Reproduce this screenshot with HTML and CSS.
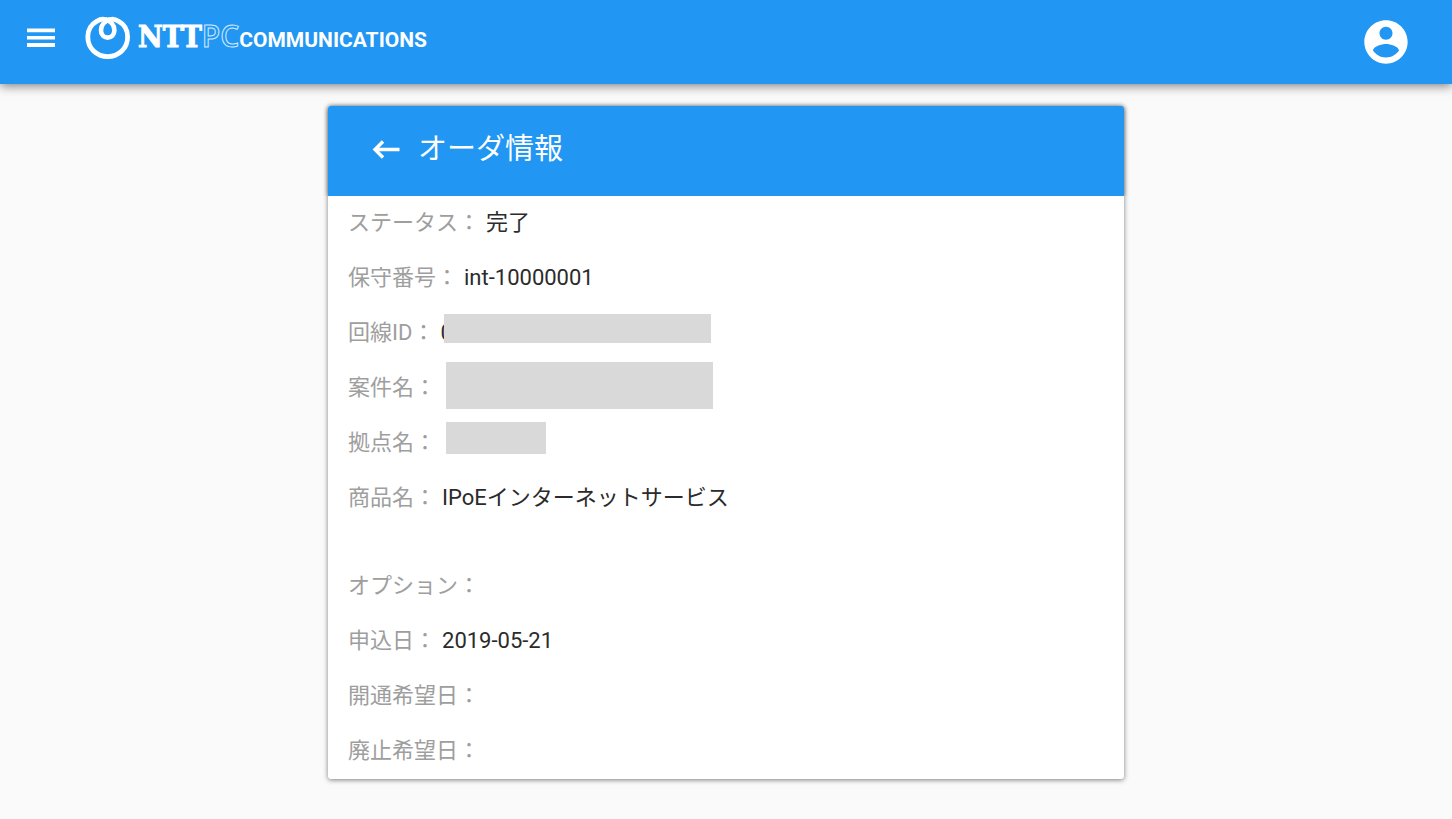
FILE: index.html
```
<!DOCTYPE html>
<html lang="ja">
<head>
    <meta charset="UTF-8">
    <meta name="viewport" content="width=device-width, initial-scale=1.0">
    <title>オーダ情報</title>
    <link rel="stylesheet" href="styles.css">
</head>
<body>
    <header class="app-bar">
        <button type="button" class="icon-button menu-button" aria-label="メニュー">
            <svg width="28" height="20" viewBox="0 0 28 20" fill="currentColor">
                <path d="M0 0.5h28v3.8H0zM0 8.1h28v3.4H0zM0 15.1h28v3.8H0z"/>
            </svg>
        </button>
        <a href="#" class="logo">
            <svg class="logo-mark" width="46" height="44" viewBox="0 0 46 44" fill="none" stroke="currentColor">
                <path stroke-width="4.6" d="M25 3.200C19 5.500 16 9.500 16 14.300C16 18.800 19 21.600 22.700 21.600C26.400 21.600 29.400 18.800 29.400 14.300C29.400 9.500 26.400 5.500 20.400 3.200"/>
                <path stroke-width="4.800" d="M22.700 4.500C19.500 2.700 15.500 2.800 12 5.200C6.500 8.200 2.800 14 2.800 21C2.800 32.200 11.700 40.600 22.700 40.600C33.700 40.600 42.600 32.200 42.600 21C42.600 14 39 8.200 33.400 5.200C30 2.800 26 2.700 22.700 4.500"/>
            </svg>
            <span class="logo-text">
                <span class="logo-ntt">NTT</span><span class="logo-pc">PC</span><span class="logo-com">COMMUNICATIONS</span>
            </span>
        </a>
        <button type="button" class="icon-button account-button" aria-label="アカウント">
            <svg width="52" height="52" viewBox="0 0 24 24" fill="currentColor">
                <path d="M12 2C6.480 2 2 6.480 2 12s4.480 10 10 10 10-4.480 10-10S17.520 2 12 2zm0 3c1.660 0 3 1.340 3 3s-1.340 3-3 3-3-1.340-3-3 1.340-3 3-3zm0 14.200c-2.500 0-4.710-1.280-6-3.220.03-1.990 4-3.080 6-3.080 1.990 0 5.970 1.090 6 3.080-1.290 1.940-3.500 3.220-6 3.220z"/>
            </svg>
        </button>
    </header>

    <main class="card">
        <div class="card-header">
            <button type="button" class="icon-button back-button" aria-label="戻る">
                <svg width="28" height="20" viewBox="0 0 28 20" fill="none" stroke="currentColor" stroke-width="3.400">
                    <path d="M27.500 10.500H3M11 2.500L3 10.500L11 18.500"/>
                </svg>
            </button>
            <h1>オーダ情報</h1>
        </div>
        <dl class="details">
            <div class="row">
                <dt>ステータス：</dt>
                <dd>完了</dd>
            </div>
            <div class="row">
                <dt>保守番号：</dt>
                <dd>int-10000001</dd>
            </div>
            <div class="row">
                <dt>回線ID：</dt>
                <dd>0<span class="mask mask-line"></span></dd>
            </div>
            <div class="row">
                <dt>案件名：</dt>
                <dd><span class="mask mask-project"></span></dd>
            </div>
            <div class="row">
                <dt>拠点名：</dt>
                <dd><span class="mask mask-site"></span></dd>
            </div>
            <div class="row row-product">
                <dt>商品名：</dt>
                <dd>IPoEインターネットサービス</dd>
            </div>
            <div class="row">
                <dt>オプション：</dt>
                <dd></dd>
            </div>
            <div class="row">
                <dt>申込日：</dt>
                <dd>2019-05-21</dd>
            </div>
            <div class="row">
                <dt>開通希望日：</dt>
                <dd></dd>
            </div>
            <div class="row">
                <dt>廃止希望日：</dt>
                <dd></dd>
            </div>
        </dl>
    </main>
</body>
</html>
```
FILE: styles.css
```
* {
    box-sizing: border-box;
}

body {
    margin: 0;
    background-color: #fafafa;
    color: #2b2b2b;
    font-family: Roboto, 'Noto Sans CJK JP', sans-serif;
    font-size: 22px;
    line-height: 32px;
}

.app-bar {
    display: flex;
    align-items: center;
    height: 84px;
    padding: 0 40px 0 27px;
    background-color: #2196f3;
    color: #fff;
    box-shadow: 0 2px 10px rgba(0, 0, 0, 0.5);
}

.icon-button {
    display: flex;
    padding: 0;
    border: none;
    background: none;
    color: inherit;
    cursor: pointer;
}

.menu-button {
    margin-bottom: 8px;
}

.account-button {
    margin-left: auto;
}

.logo {
    display: flex;
    align-items: center;
    gap: 7px;
    margin-left: 30px;
    margin-bottom: 8px;
    color: inherit;
    text-decoration: none;
}

.logo-text {
    display: flex;
    align-items: baseline;
    white-space: nowrap;
}

.logo-ntt {
    font-family: 'DejaVu Serif Condensed', 'DejaVu Serif', serif;
    font-size: 30px;
    font-weight: bold;
    -webkit-text-stroke: 1px #fff;
}

.logo-pc {
    font-family: 'Open Sans', sans-serif;
    font-size: 30px;
    font-weight: 600;
    color: #2196f3;
    -webkit-text-stroke: 1px #d3eafd;
}

.logo-com {
    font-size: 21px;
    font-weight: bold;
}

.card {
    width: 90%;
    max-width: 796px;
    margin: 22px auto 40px;
    border-radius: 3px;
    background-color: #fff;
    box-shadow: 0 1px 5px rgba(0, 0, 0, 0.5);
}

.card-header {
    display: flex;
    align-items: center;
    gap: 18px;
    height: 90px;
    padding: 0 44px 4px;
    border-radius: 3px 3px 0 0;
    background-color: #2196f3;
    color: #fff;
    box-shadow: 0 0 5px rgba(0, 0, 0, 0.4);
    clip-path: inset(-8px -8px 0 -8px);
}

.card-header h1 {
    margin: 0;
    font-size: 29px;
    font-weight: 400;
    line-height: 40px;
}

.details {
    margin: 0;
    padding: 0 20px;
}

.row {
    display: flex;
    gap: 6px;
    min-height: 55px;
    padding-top: 11px;
}

.row-product {
    min-height: 88px;
}

.row dt {
    color: #9e9e9e;
}

.row dd {
    position: relative;
    margin: 0;
}

/* grey blocks that cover private values */
.mask {
    position: absolute;
    left: 4px;
    width: 267px;
    background-color: #d9d9d9;
}

.mask-line {
    top: -3px;
    height: 29px;
}

.mask-project {
    top: -10px;
    height: 47px;
}

.mask-site {
    top: -5px;
    width: 100px;
    height: 32px;
}
```
